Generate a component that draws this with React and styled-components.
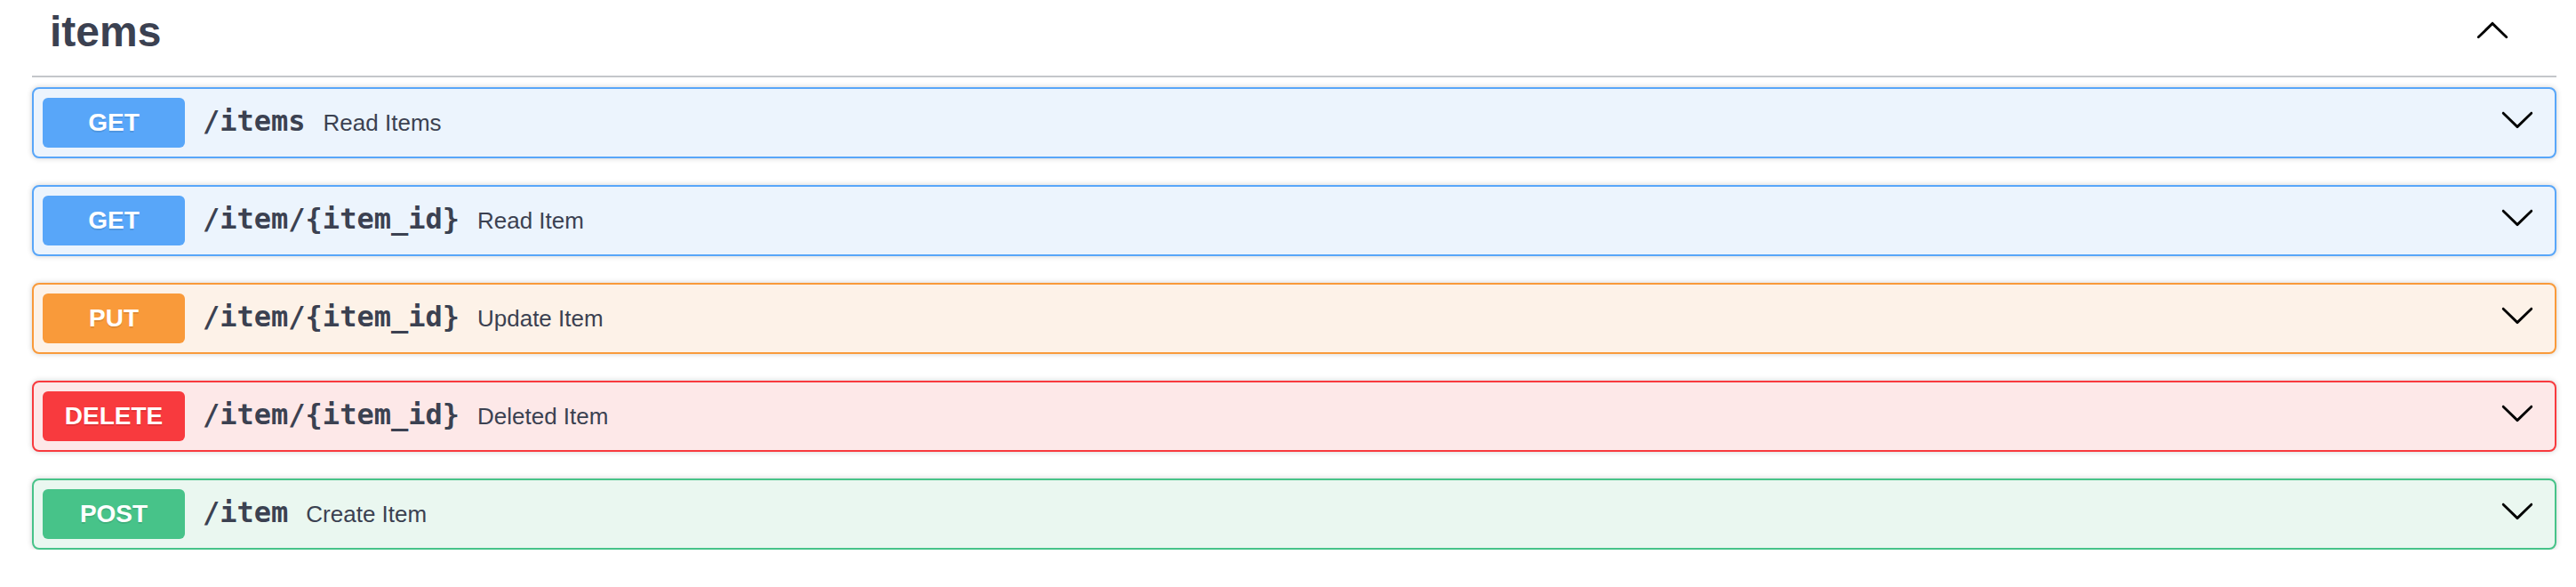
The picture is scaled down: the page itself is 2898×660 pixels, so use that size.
import React from "react";
import styled, { createGlobalStyle } from "styled-components";

const GlobalStyle = createGlobalStyle`
  html, body {
    margin: 0;
    padding: 0;
    background: #ffffff;
  }
  body {
    font-family: "Liberation Sans", Arial, sans-serif;
    color: #3b4151;
  }
`;

const METHODS = {
  get: { badge: "#58a6f9", bg: "#ecf4fd", border: "#58a6f9" },
  put: { badge: "#f99a3a", bg: "#fdf2e8", border: "#f99a3a" },
  delete: { badge: "#f83a3e", bg: "#fde8e8", border: "#f83a3e" },
  post: { badge: "#47c389", bg: "#eaf7f0", border: "#47c389" },
};

const Wrapper = styled.div`
  padding: 0 22px 0 36px;
`;

const TagSection = styled.section`
  display: flex;
  flex-direction: column;
`;

const TagHeader = styled.div`
  display: flex;
  align-items: flex-start;
  justify-content: space-between;
  box-sizing: border-box;
  height: 87px;
  padding: 12px 52px 0 20px;
  border-bottom: 2px solid rgba(59, 65, 81, 0.3);
  margin-bottom: 11px;
`;

const TagTitle = styled.h3`
  margin: 0;
  font-family: "Liberation Sans", Arial, sans-serif;
  font-size: 48px;
  line-height: 48px;
  font-weight: 700;
  color: #3b4151;
`;

const Arrow = styled.svg`
  width: 40px;
  height: 40px;
  flex: 0 0 auto;
  fill: #000;
  margin-top: ${(p) => (p.$offset ? p.$offset : 0)}px;
  margin-right: ${(p) => (p.$right ? p.$right : 0)}px;
  margin-bottom: ${(p) => (p.$bottom ? p.$bottom : 0)}px;
  transform: ${(p) => (p.$up ? "rotate(180deg)" : "none")};
`;

const OpList = styled.div`
  display: flex;
  flex-direction: column;
  gap: 30px;
`;

const OpBlock = styled.div`
  box-sizing: border-box;
  border: 2px solid ${(p) => METHODS[p.$method].border};
  background: ${(p) => METHODS[p.$method].bg};
  border-radius: 8px;
  box-shadow: 0 0 6px rgba(0, 0, 0, 0.19);
`;

const Summary = styled.div`
  display: flex;
  align-items: center;
  padding: 10px;
`;

const MethodBadge = styled.span`
  box-sizing: border-box;
  min-width: 160px;
  height: 56px;
  padding: 12px 0;
  border-radius: 6px;
  background: ${(p) => METHODS[p.$method].badge};
  color: #fff;
  font-family: "Liberation Sans", Arial, sans-serif;
  font-size: 28px;
  line-height: 32px;
  font-weight: 700;
  text-align: center;
  text-shadow: 0 2px 0 rgba(0, 0, 0, 0.1);
  flex: 0 0 auto;
`;

const Path = styled.span`
  padding: 0 20px;
  font-family: "DejaVu Sans Mono", "Liberation Mono", monospace;
  font-size: 32px;
  font-weight: 700;
  color: #3b4151;
  position: relative;
  top: -2px;
`;

const Description = styled.span`
  flex: 1 1 auto;
  font-family: "Liberation Sans", Arial, sans-serif;
  font-size: 26px;
  color: #3b4151;
`;

const CHEVRON =
  "M17.418 6.109c.272-.268.709-.268.979 0s.271.701 0 .969l-7.908 7.83c-.27.268-.707.268-.979 0l-7.908-7.83c-.27-.268-.27-.701 0-.969.271-.268.709-.268.979 0L10 13.25l7.418-7.141z";

const ops = [
  { method: "get", label: "GET", path: "/items", desc: "Read Items" },
  { method: "get", label: "GET", path: "/item/{item_id}", desc: "Read Item" },
  { method: "put", label: "PUT", path: "/item/{item_id}", desc: "Update Item" },
  { method: "delete", label: "DELETE", path: "/item/{item_id}", desc: "Deleted Item" },
  { method: "post", label: "POST", path: "/item", desc: "Create Item" },
];

export default function App() {
  return (
    <>
      <GlobalStyle />
      <Wrapper>
        <TagSection>
          <TagHeader>
            <TagTitle>items</TagTitle>
            <Arrow viewBox="0 0 20 20" $up $offset={3} aria-hidden="true">
              <path d={CHEVRON} />
            </Arrow>
          </TagHeader>
          <OpList>
            {ops.map((op, i) => (
              <OpBlock key={i} $method={op.method}>
                <Summary>
                  <MethodBadge $method={op.method}>{op.label}</MethodBadge>
                  <Path>{op.path}</Path>
                  <Description>{op.desc}</Description>
                  <Arrow viewBox="0 0 20 20" $right={12} $bottom={8} aria-hidden="true">
                    <path d={CHEVRON} />
                  </Arrow>
                </Summary>
              </OpBlock>
            ))}
          </OpList>
        </TagSection>
      </Wrapper>
    </>
  );
}
